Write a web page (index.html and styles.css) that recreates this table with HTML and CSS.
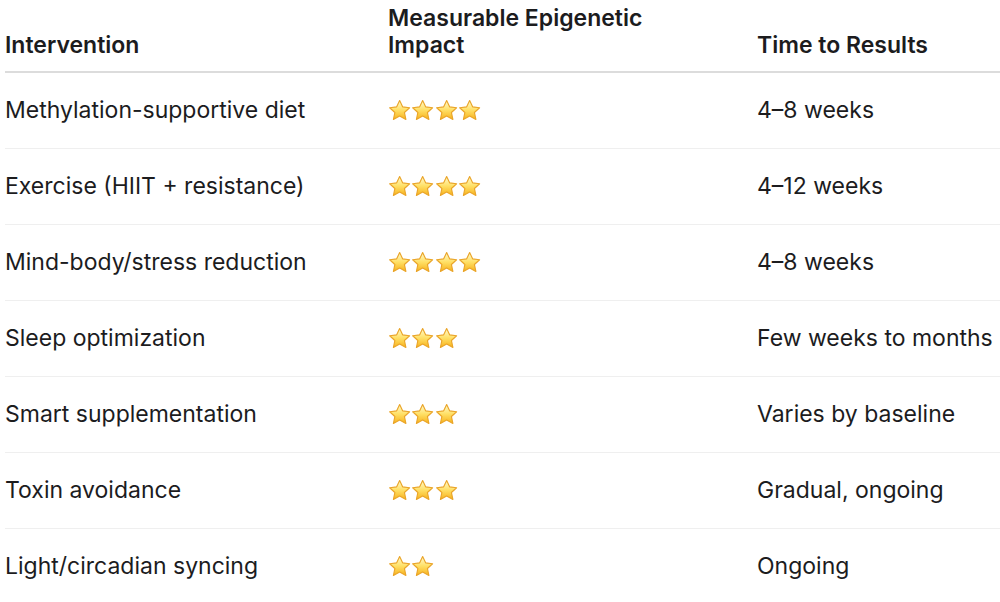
FILE: index.html
```html
<!DOCTYPE html>
<html lang="en">
<head>
<meta charset="utf-8">
<title>Interventions</title>
<link rel="stylesheet" href="styles.css">
</head>
<body>
<svg class="defs" width="0" height="0" aria-hidden="true">
  <defs>
    <linearGradient id="starFill" x1="0" y1="0" x2="0" y2="1">
      <stop offset="0" stop-color="#fffbd0"/>
      <stop offset="0.5" stop-color="#ffe066"/>
      <stop offset="1" stop-color="#f7b21c"/>
    </linearGradient>
    <symbol id="star" viewBox="0 0 24 24">
      <path d="M12 1.6l3.1 6.6 7.3.9-5.4 5 1.5 7.2L12 17.8l-6.5 3.5L7 14.1l-5.4-5 7.3-.9z" fill="url(#starFill)" stroke="#eaa52a" stroke-width="1.2" stroke-linejoin="round"/>
    </symbol>
  </defs>
</svg>
<table class="grid">
  <thead>
    <tr>
      <th class="c1">Intervention</th>
      <th class="c2">Measurable Epigenetic Impact</th>
      <th class="c3">Time to Results</th>
    </tr>
  </thead>
  <tbody>
    <tr>
      <td>Methylation-supportive diet</td>
      <td><span class="stars"><svg><use href="#star"/></svg><svg><use href="#star"/></svg><svg><use href="#star"/></svg><svg><use href="#star"/></svg></span></td>
      <td>4–8 weeks</td>
    </tr>
    <tr>
      <td>Exercise (HIIT + resistance)</td>
      <td><span class="stars"><svg><use href="#star"/></svg><svg><use href="#star"/></svg><svg><use href="#star"/></svg><svg><use href="#star"/></svg></span></td>
      <td>4–12 weeks</td>
    </tr>
    <tr>
      <td>Mind-body/stress reduction</td>
      <td><span class="stars"><svg><use href="#star"/></svg><svg><use href="#star"/></svg><svg><use href="#star"/></svg><svg><use href="#star"/></svg></span></td>
      <td>4–8 weeks</td>
    </tr>
    <tr>
      <td>Sleep optimization</td>
      <td><span class="stars"><svg><use href="#star"/></svg><svg><use href="#star"/></svg><svg><use href="#star"/></svg></span></td>
      <td>Few weeks to months</td>
    </tr>
    <tr>
      <td>Smart supplementation</td>
      <td><span class="stars"><svg><use href="#star"/></svg><svg><use href="#star"/></svg><svg><use href="#star"/></svg></span></td>
      <td>Varies by baseline</td>
    </tr>
    <tr>
      <td>Toxin avoidance</td>
      <td><span class="stars"><svg><use href="#star"/></svg><svg><use href="#star"/></svg><svg><use href="#star"/></svg></span></td>
      <td>Gradual, ongoing</td>
    </tr>
    <tr>
      <td>Light/circadian syncing</td>
      <td><span class="stars"><svg><use href="#star"/></svg><svg><use href="#star"/></svg></span></td>
      <td>Ongoing</td>
    </tr>
  </tbody>
</table>
</body>
</html>
```
FILE: styles.css
```css
html, body {
  margin: 0;
  padding: 0;
  background: #ffffff;
  overflow: hidden;
}
body {
  font-family: Inter, "Noto Sans", "Liberation Sans", sans-serif;
  color: #1c1c1e;
  font-size: 23px;
}
.defs {
  position: absolute;
  width: 0;
  height: 0;
}
.grid {
  border-collapse: collapse;
  margin-left: 5px;
  width: 1030px;
  table-layout: fixed;
}
.grid th {
  text-align: left;
  font-weight: 600;
  line-height: 27px;
  vertical-align: bottom;
  height: 72px;
  padding: 0 0 12px 0;
  box-sizing: border-box;
  border-bottom: 2px solid #dcdcdc;
}
.grid .c1 { width: 383px; }
.grid .c2 { width: 369px; padding-right: 80px; }
.grid td {
  height: 75px;
  padding: 0;
  vertical-align: middle;
  border-bottom: 1px solid #efefef;
  line-height: 27px;
}
.stars {
  display: flex;
  align-items: center;
}
.stars svg {
  width: 23.3px;
  height: 23px;
}
```
